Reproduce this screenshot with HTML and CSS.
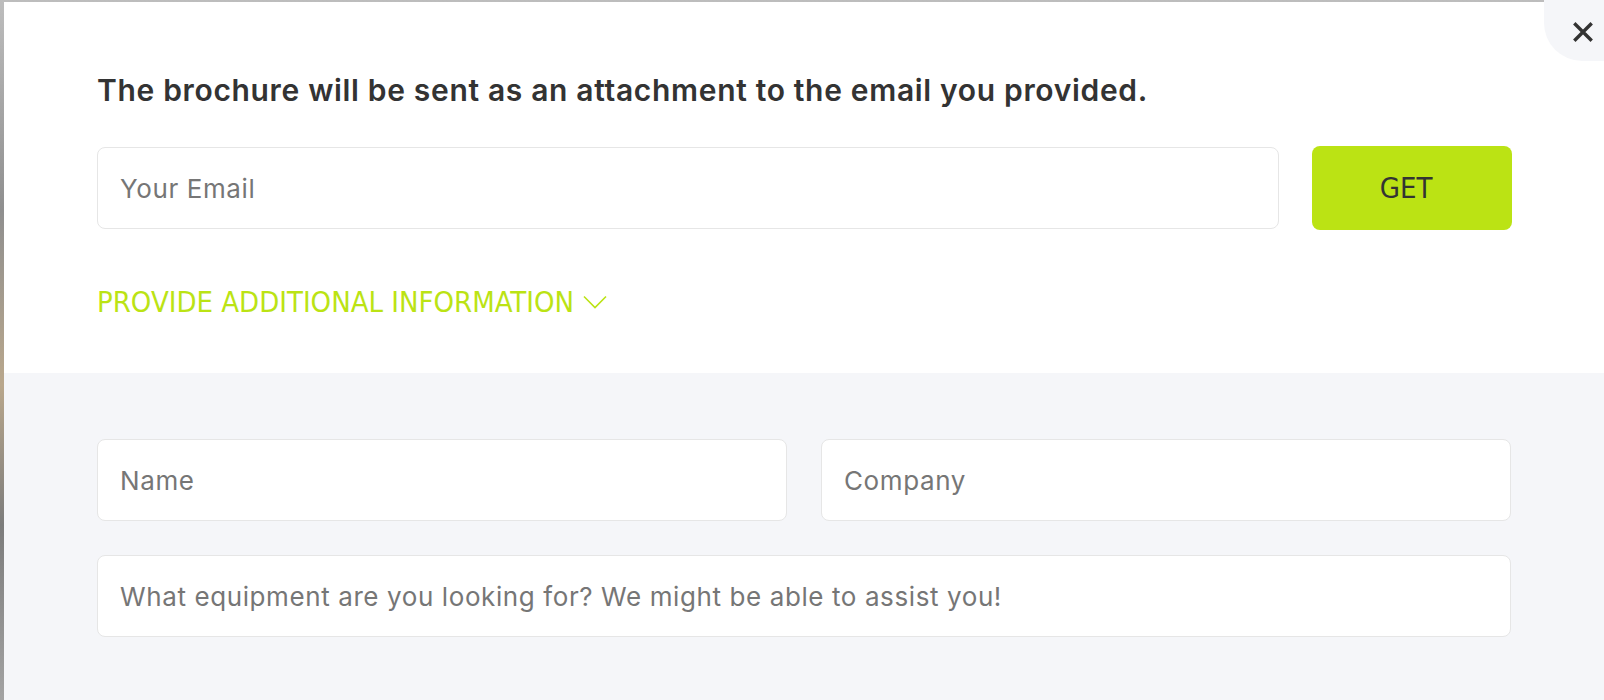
FILE: index.html
```html
<!DOCTYPE html>
<html lang="en">
<head>
<meta charset="utf-8">
<title>Brochure</title>
<link rel="stylesheet" href="styles.css">
</head>
<body>
<div class="modal">
  <button class="close" aria-label="Close">
    <svg width="20" height="20" viewBox="0 0 20 20"><path d="M2.5 2.5L17.5 17.5M17.5 2.5L2.5 17.5" stroke="#333" stroke-width="3.4" stroke-linecap="square"/></svg>
  </button>
  <section class="top">
    <h1 class="title">The brochure will be sent as an attachment to the email you provided.</h1>
    <div class="email-row">
      <input class="field email" type="email" placeholder="Your Email">
      <button class="get">GET</button>
    </div>
    <a class="more" href="#">PROVIDE ADDITIONAL INFORMATION
      <svg class="chev" width="24" height="14" viewBox="0 0 24 14"><path d="M1 1.5L12 12.5L23 1.5" fill="none" stroke="#bbe314" stroke-width="1.6"/></svg>
    </a>
  </section>
  <section class="extra">
    <div class="pair">
      <input class="field" type="text" placeholder="Name">
      <input class="field" type="text" placeholder="Company">
    </div>
    <input class="field" type="text" placeholder="What equipment are you looking for? We might be able to assist you!">
  </section>
</div>
</body>
</html>
```
FILE: styles.css
```css
html, body {
  margin: 0;
  height: 100%;
  overflow: hidden;
}
body {
  background: linear-gradient(180deg, #bdbdbd 0%, #8f8f8f 30%, #b9a78c 55%, #7c7c7c 75%, #a3a3a3 100%);
  font-family: Inter, "Noto Sans", sans-serif;
}
.modal {
  position: relative;
  margin: 2px 0 0 4px;
  height: 698px;
  background: #f5f6f9;
  box-sizing: border-box;
}
.top {
  background: #fff;
  height: 371px;
  box-sizing: border-box;
  padding: 70px 92px 0 93px;
}
.title {
  margin: 0;
  font-size: 30px;
  line-height: 36px;
  font-weight: 600;
  color: #333;
  letter-spacing: 0.67px;
}
.email-row {
  display: flex;
  align-items: center;
  gap: 33px;
  margin-top: 38px;
}
.field {
  display: block;
  box-sizing: border-box;
  width: 100%;
  height: 82px;
  border: 1.5px solid #e6e6e6;
  border-radius: 8px;
  background: #fff;
  padding: 0 22px;
  font-family: Inter, "Noto Sans", sans-serif;
  font-size: 26px;
  letter-spacing: 0.6px;
  color: #333;
  outline: none;
}
.field::placeholder {
  color: #767676;
}
.email {
  flex: 1;
}
.get {
  flex: none;
  width: 200px;
  height: 84px;
  border: 0;
  border-radius: 8px;
  background: #bbe314;
  color: #333;
  font-family: "Liberation Sans Narrow", "DejaVu Sans Condensed", Roboto, sans-serif;
  font-size: 29px;
  letter-spacing: 0;
  padding: 0 12px 0 0;
  cursor: pointer;
}
.more {
  display: inline-flex;
  align-items: center;
  gap: 9px;
  margin-top: 54px;
  color: #bbe314;
  text-decoration: none;
  font-family: "Liberation Sans Narrow", "DejaVu Sans Condensed", Roboto, sans-serif;
  font-size: 29px;
  line-height: 36px;
}
.chev {
  display: block;
}
.extra {
  padding: 66px 93px 0 93px;
  display: flex;
  flex-direction: column;
  gap: 34px;
}
.pair {
  display: grid;
  grid-template-columns: 1fr 1fr;
  gap: 34px;
}
.close {
  position: absolute;
  top: -2px;
  right: 0;
  width: 60px;
  height: 61px;
  border: 0;
  padding: 0;
  background: #f5f6f9;
  border-bottom-left-radius: 38px;
  display: flex;
  align-items: center;
  justify-content: center;
  cursor: pointer;
}
.close svg {
  margin: 2px 0 0 18px;
}
```
